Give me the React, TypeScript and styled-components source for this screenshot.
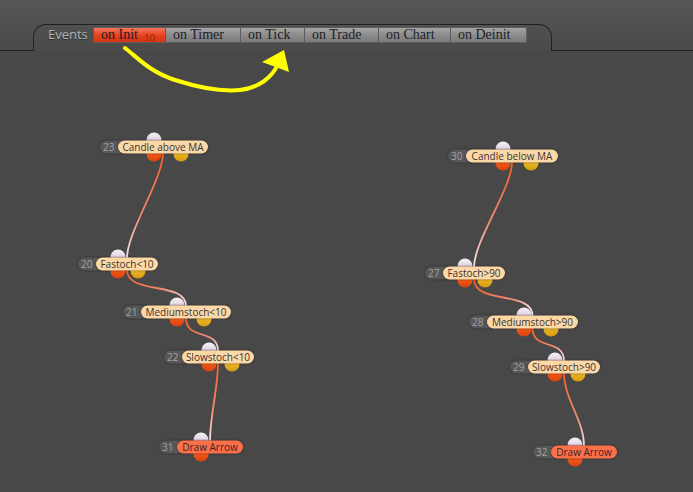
import React from 'react';
import styled, { createGlobalStyle } from 'styled-components';

const GlobalStyle = createGlobalStyle`
  html, body {
    margin: 0;
    padding: 0;
    background: #484848;
    overflow: hidden;
  }
`;

const CANVAS_TOP = 51;

const Root = styled.div`
  position: relative;
  width: 693px;
  height: 492px;
  display: flex;
  flex-direction: column;
  overflow: hidden;
  background: #484848;
`;

const Header = styled.header`
  height: 51px;
  flex-shrink: 0;
  display: flex;
  align-items: flex-end;
  background: linear-gradient(#575757, #4a4a4a);
`;

const Rule = styled.div<{ $grow?: boolean }>`
  width: ${({ $grow }) => ($grow ? 'auto' : '33px')};
  flex: ${({ $grow }) => ($grow ? 1 : 'none')};
  border-bottom: 1px solid #202020;
`;

const Tab = styled.div`
  width: 503px;
  height: 24px;
  display: flex;
  align-items: flex-start;
  padding: 2px 0 0 14px;
  box-sizing: content-box;
  border: 1px solid #202020;
  border-bottom: none;
  border-radius: 13px 13px 0 0;
`;

const TabTitle = styled.span`
  width: 45px;
  font-family: 'Open Sans', 'Liberation Sans', sans-serif;
  font-size: 13px;
  line-height: 15px;
  color: #b4b4b4;
  text-shadow: 0 1px 1px rgba(0, 0, 0, 0.4);
`;

const EventButton = styled.div<{ $active?: boolean; $w: number }>`
  position: relative;
  width: ${({ $w }) => $w}px;
  height: 16px;
  box-sizing: border-box;
  padding-left: 7px;
  border: 1px solid #5c5c5c;
  border-left-width: ${({ $active }) => ($active ? 1 : 0)}px;
  background: ${({ $active }) =>
    $active
      ? 'linear-gradient(#f4775a, #e5401d 55%, #d83514)'
      : 'linear-gradient(#a4a4a4, #8a8a8a 55%, #7c7c7c)'};
  font-family: 'Liberation Serif', 'Times New Roman', serif;
  font-size: 14px;
  line-height: 14px;
  color: #1c1c28;
  white-space: nowrap;
`;

const Badge = styled.span`
  position: absolute;
  left: 50px;
  top: 4px;
  font-family: 'Liberation Serif', serif;
  font-size: 11px;
  line-height: 11px;
  color: #8e2c10;
`;

const Canvas = styled.main`
  position: relative;
  flex: 1;
`;

const Wires = styled.svg`
  position: absolute;
  left: 0;
  top: 0;
`;

const NodeBox = styled.div`
  position: absolute;
  display: flex;
  align-items: center;
  height: 13px;
  transform: translateY(-50%);
`;

const NodeNum = styled.span`
  position: relative;
  z-index: 1;
  width: 24px;
  height: 13px;
  margin-right: -6px;
  box-sizing: border-box;
  padding-left: 3px;
  border-radius: 7px 0 0 7px;
  background: #575757;
  box-shadow: 0 0 2px rgba(0, 0, 0, 0.5);
  font-family: 'Open Sans', 'Liberation Sans', sans-serif;
  font-size: 10px;
  line-height: 13px;
  color: #a2a2aa;
`;

const NodeLabel = styled.span<{ $w: number; $action?: boolean }>`
  position: relative;
  z-index: 2;
  width: ${({ $w }) => $w}px;
  height: 13px;
  border-radius: 7px;
  background: ${({ $action }) => ($action ? '#fb7049' : '#fcd8a6')};
  box-shadow: 0 0 2px rgba(0, 0, 0, 0.55);
  text-align: center;
  font-family: 'Open Sans', 'Liberation Sans', sans-serif;
  font-size: 10px;
  line-height: 13px;
  color: ${({ $action }) => ($action ? '#3a2424' : '#3a3436')};
  white-space: nowrap;
`;

const Pin = styled.span<{ $kind: 'in' | 'out' | 'alt' }>`
  position: absolute;
  z-index: 0;
  width: 15px;
  height: 15px;
  border-radius: 50%;
  left: ${({ $kind }) => ($kind === 'alt' ? '75%' : '50%')};
  transform: translateX(-50%);
  ${({ $kind }) => ($kind === 'in' ? 'top: -8px;' : 'bottom: -8px;')}
  background: ${({ $kind }) =>
    $kind === 'in'
      ? 'linear-gradient(#f6f0f6, #e4d8e6 45%, #b9aabd 55%, #d8ccdc)'
      : $kind === 'out'
      ? 'linear-gradient(#f26a2a, #ee5316 60%, #d9420e)'
      : 'linear-gradient(#f0c638, #e6b01d 60%, #d49c12)'};
`;

const Overlay = styled.svg`
  position: absolute;
  left: 0;
  top: 0;
  pointer-events: none;
`;

type NodeData = {
  id: number;
  label: string;
  x: number;
  cy: number;
  w: number;
  action?: boolean;
};

const nodes: NodeData[] = [
  { id: 23, label: 'Candle above MA', x: 100, cy: 147, w: 90 },
  { id: 20, label: 'Fastoch<10', x: 78, cy: 264, w: 62 },
  { id: 21, label: 'Mediumstoch<10', x: 123, cy: 312, w: 90 },
  { id: 22, label: 'Slowstoch<10', x: 164, cy: 357, w: 72 },
  { id: 31, label: 'Draw Arrow', x: 159, cy: 447, w: 66, action: true },
  { id: 30, label: 'Candle below MA', x: 448, cy: 156, w: 92 },
  { id: 27, label: 'Fastoch>90', x: 425, cy: 273, w: 62 },
  { id: 28, label: 'Mediumstoch>90', x: 469, cy: 322, w: 91 },
  { id: 29, label: 'Slowstoch>90', x: 510, cy: 367, w: 72 },
  { id: 32, label: 'Draw Arrow', x: 533, cy: 452, w: 66, action: true },
];

const links: [number, number][] = [
  [23, 20],
  [20, 21],
  [21, 22],
  [22, 31],
  [30, 27],
  [27, 28],
  [28, 29],
  [29, 32],
];

const events = [
  { name: 'on Init', w: 73, active: true },
  { name: 'on Timer', w: 75 },
  { name: 'on Tick', w: 64 },
  { name: 'on Trade', w: 74 },
  { name: 'on Chart', w: 72 },
  { name: 'on Deinit', w: 76 },
];

const centerX = (n: NodeData) => n.x + 18 + n.w / 2;
const byId = (id: number) => nodes.find((n) => n.id === id)!;

const Node: React.FC<{ node: NodeData }> = ({ node }) => (
  <NodeBox style={{ left: node.x, top: node.cy - CANVAS_TOP }}>
    <Pin $kind="in" />
    <NodeNum>{node.id}</NodeNum>
    <NodeLabel $w={node.w} $action={node.action}>
      {node.label}
    </NodeLabel>
    <Pin $kind="out" />
    {!node.action && <Pin $kind="alt" />}
  </NodeBox>
);

const Links: React.FC = () => (
  <Wires width={693} height={492 - CANVAS_TOP} viewBox={`0 ${CANVAS_TOP} 693 ${492 - CANVAS_TOP}`}>
    <defs>
      {links.map(([a, b]) => {
        const from = byId(a);
        const to = byId(b);
        return (
          <linearGradient
            key={`g${a}`}
            id={`wire${a}`}
            gradientUnits="userSpaceOnUse"
            x1={centerX(from)}
            y1={from.cy + 6}
            x2={centerX(to)}
            y2={to.cy - 6}
          >
            <stop offset="0" stopColor="#f2612a" />
            <stop offset="0.6" stopColor="#f48c70" />
            <stop offset="1" stopColor="#f6e4ee" />
          </linearGradient>
        );
      })}
    </defs>
    {links.map(([a, b]) => {
      const from = byId(a);
      const to = byId(b);
      const x1 = centerX(from);
      const y1 = from.cy + 6;
      const x2 = centerX(to);
      const y2 = to.cy - 6;
      const k = Math.min((y2 - y1) * 0.7, 26);
      return (
        <path
          key={a}
          d={`M${x1} ${y1} C${x1} ${y1 + k} ${x2} ${y2 - k} ${x2} ${y2}`}
          fill="none"
          stroke={`url(#wire${a})`}
          strokeWidth={1.8}
        />
      );
    })}
  </Wires>
);

export default function App() {
  return (
    <Root>
      <GlobalStyle />
      <Header>
        <Rule />
        <Tab>
          <TabTitle>Events</TabTitle>
          {events.map((e) => (
            <EventButton key={e.name} $active={e.active} $w={e.w}>
              {e.name}
              {e.active && <Badge>10</Badge>}
            </EventButton>
          ))}
        </Tab>
        <Rule $grow />
      </Header>
      <Canvas>
        <Links />
        {nodes.map((n) => (
          <Node key={n.id} node={n} />
        ))}
      </Canvas>
      <Overlay width={693} height={120}>
        <path
          d="M125 48 C138 58 150 72 175 80 C200 88 220 92 240 90 C258 88 272 78 278 64"
          fill="none"
          stroke="#ffff00"
          strokeWidth={4}
          strokeLinecap="round"
        />
        <polygon points="262,62 284,50 289,72" fill="#ffff00" />
      </Overlay>
    </Root>
  );
}
